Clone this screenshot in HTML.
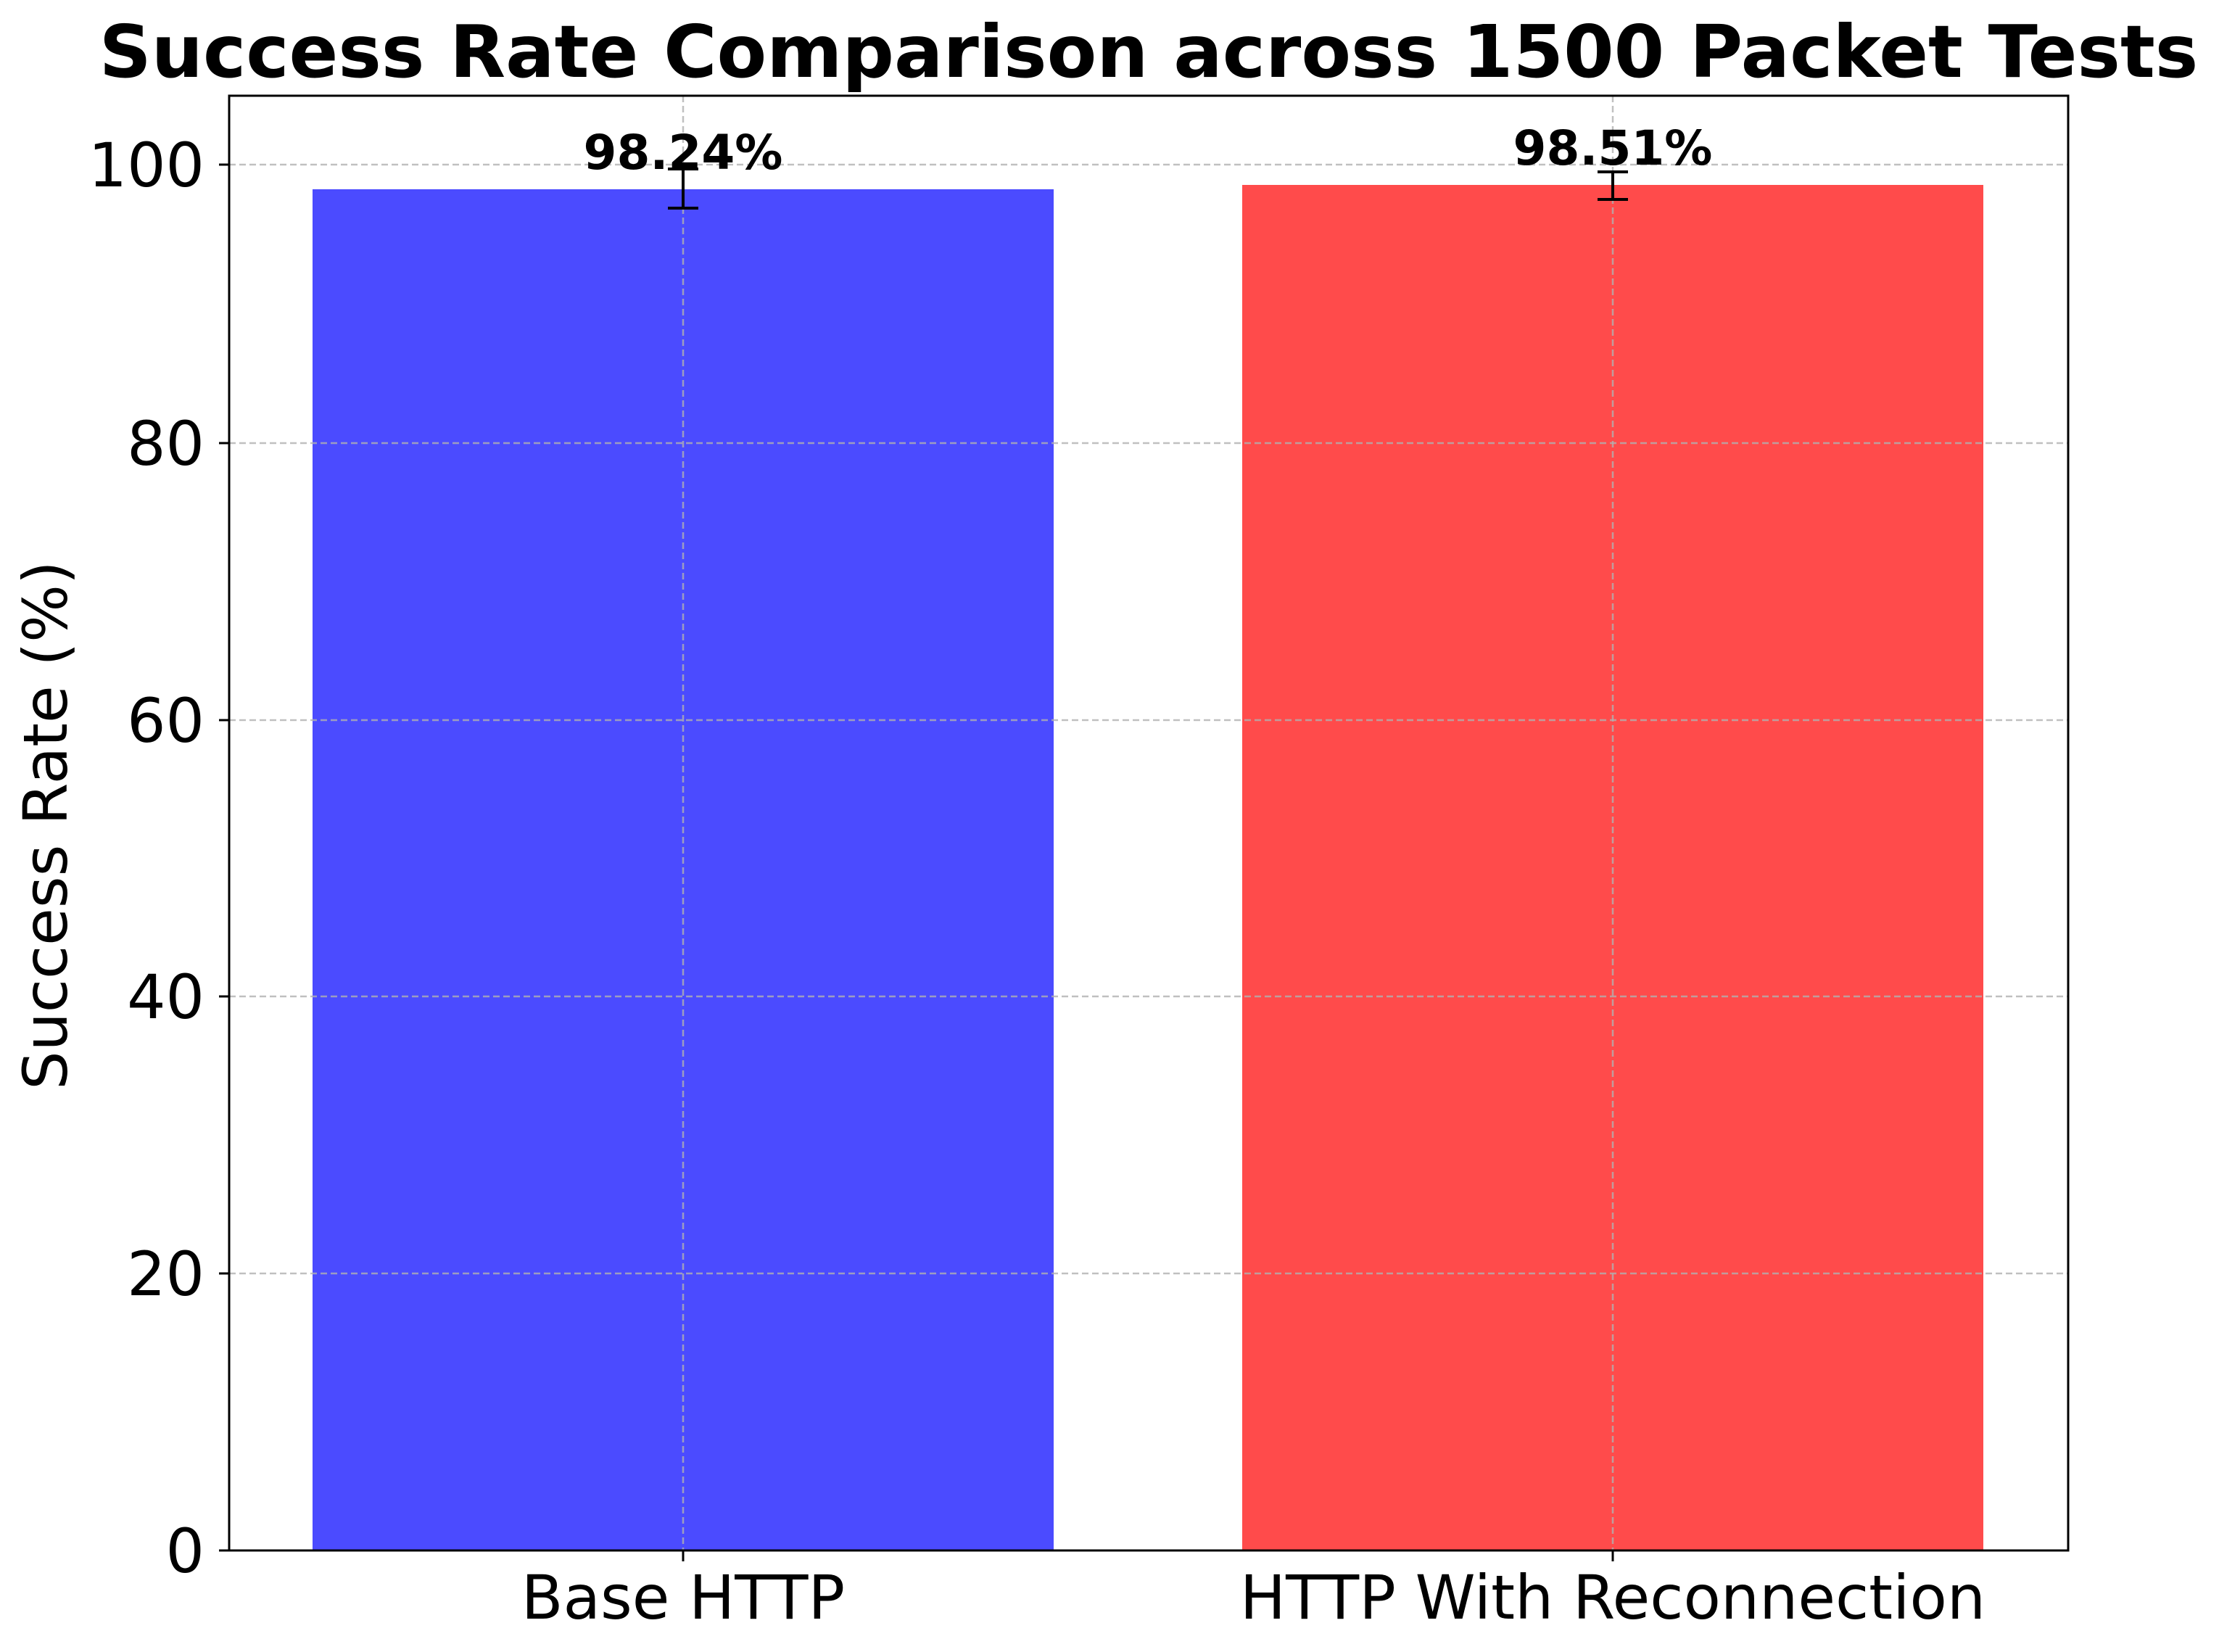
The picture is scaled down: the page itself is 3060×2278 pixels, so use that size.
<!DOCTYPE html>
<html><head><meta charset="utf-8"><style>
html,body{margin:0;padding:0;background:#fff;}
svg{display:block;}
text{font-family:"DejaVu Sans","Liberation Sans",sans-serif;fill:#000;}
</style></head><body>
<svg width="3060" height="2278" viewBox="0 0 3060 2278" xmlns="http://www.w3.org/2000/svg">
<rect width="3060" height="2278" fill="#fff"/>
<text x="1584" y="106" font-size="100" font-weight="bold" text-anchor="middle">Success Rate Comparison across 1500 Packet Tests</text>
<rect x="431" y="261" width="1022" height="1877" fill="#4b4bff"/>
<rect x="1713" y="255" width="1022" height="1883" fill="#ff4b4b"/>
<g stroke="#b0b0b0" stroke-opacity="0.8" stroke-width="2.5" stroke-dasharray="9,5">
<line x1="316" y1="1756" x2="2852" y2="1756"/>
<line x1="316" y1="1374" x2="2852" y2="1374"/>
<line x1="316" y1="993" x2="2852" y2="993"/>
<line x1="316" y1="611" x2="2852" y2="611"/>
<line x1="316" y1="227" x2="2852" y2="227"/>
<line x1="942" y1="132" x2="942" y2="2138"/>
<line x1="2224" y1="132" x2="2224" y2="2138"/>
</g>
<g stroke="#000" stroke-width="4">
<line x1="942" y1="233" x2="942" y2="287"/>
<line x1="921" y1="287" x2="963" y2="287"/>
<line x1="921" y1="233" x2="963" y2="233"/>
<line x1="2224" y1="237" x2="2224" y2="275"/>
<line x1="2203" y1="275" x2="2245" y2="275"/>
<line x1="2203" y1="237" x2="2245" y2="237"/>
</g>
<text x="942" y="233" font-size="66" font-weight="bold" text-anchor="middle">98.24%</text>
<text x="2224" y="227" font-size="66" font-weight="bold" text-anchor="middle">98.51%</text>
<rect x="316" y="132" width="2536" height="2006" fill="none" stroke="#000" stroke-width="3"/>
<g stroke="#000" stroke-width="3">
<line x1="302" y1="2138" x2="316" y2="2138"/>
<line x1="302" y1="1756" x2="316" y2="1756"/>
<line x1="302" y1="1374" x2="316" y2="1374"/>
<line x1="302" y1="993" x2="316" y2="993"/>
<line x1="302" y1="611" x2="316" y2="611"/>
<line x1="302" y1="227" x2="316" y2="227"/>
<line x1="942" y1="2138" x2="942" y2="2153"/>
<line x1="2224" y1="2138" x2="2224" y2="2153"/>
</g>
<g font-size="84" text-anchor="end">
<text x="282" y="2168">0</text>
<text x="282" y="1786">20</text>
<text x="282" y="1404">40</text>
<text x="282" y="1023">60</text>
<text x="282" y="641">80</text>
<text x="282" y="257">100</text>
</g>
<g font-size="84" text-anchor="middle">
<text x="942" y="2232">Base HTTP</text>
<text x="2224" y="2232">HTTP With Reconnection</text>
</g>
<text font-size="84" text-anchor="middle" transform="translate(92,1138) rotate(-90)">Success Rate (%)</text>
</svg>
</body></html>
